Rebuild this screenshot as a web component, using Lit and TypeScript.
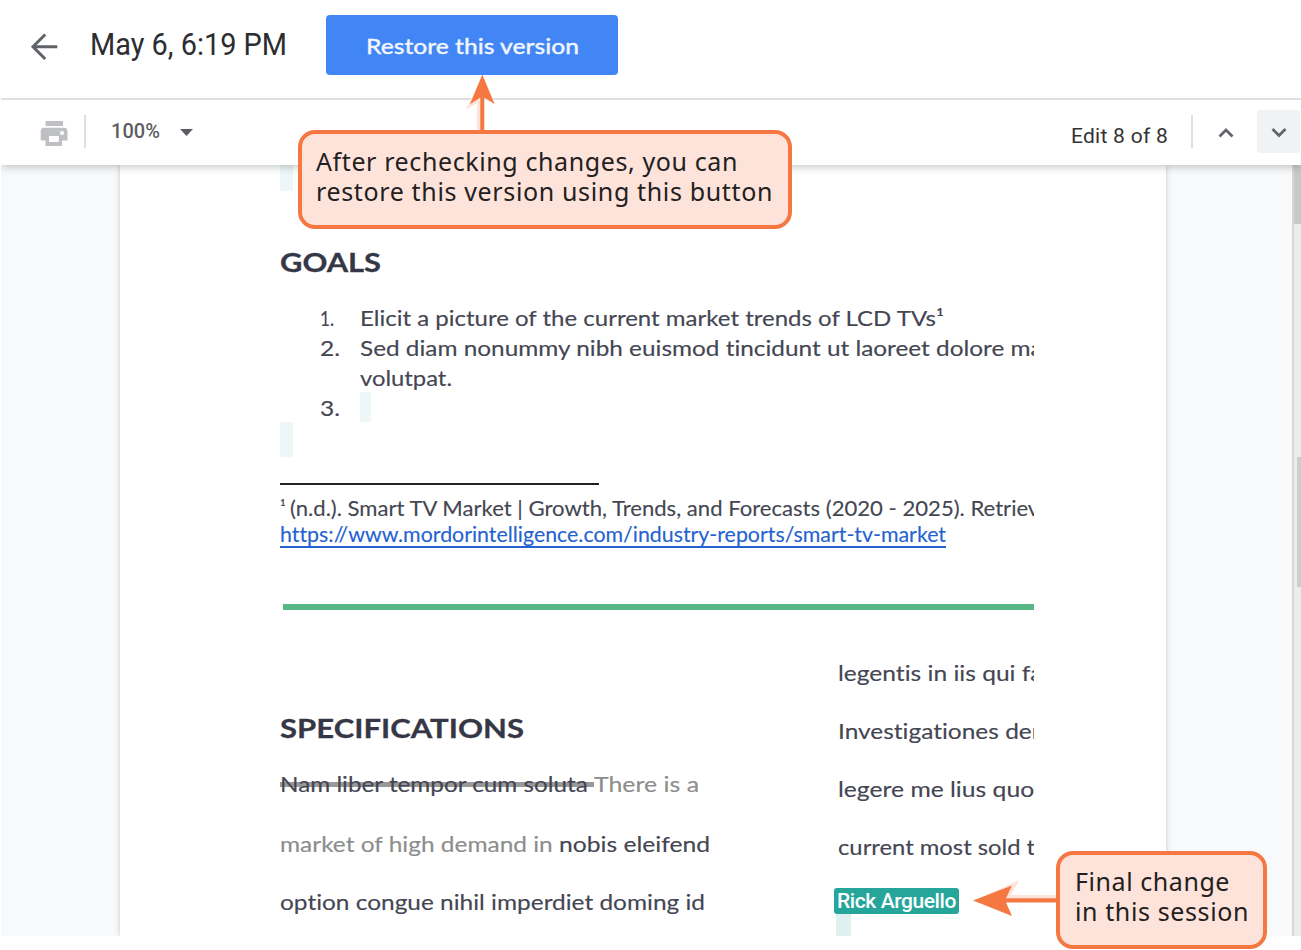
import { LitElement, html, css, svg } from "lit";
import { customElement, property } from "lit/decorators.js";

/** A run of text whose tracking (or horizontal scale) is adjusted to span `width` pixels. */
@customElement("fit-text")
class FitText extends LitElement {
  @property({ type: Number }) width = 0;
  @property({ type: Boolean }) stretch = false;

  static styles = css`
    :host { display: inline-block; white-space: pre; vertical-align: baseline; text-align: left; font-variant-ligatures: none; }
    .run { display: inline-block; transform-origin: 0 50%; }
  `;

  render() {
    return html`<span class="run"><slot></slot></span>`;
  }

  async firstUpdated() {
    this.fit();
    await document.fonts.ready;
    this.fit();
  }

  private fit() {
    const run = this.renderRoot.querySelector(".run") as HTMLElement;
    run.style.letterSpacing = "0px";
    run.style.transform = "none";
    const natural = run.getBoundingClientRect().width;
    const count = (this.textContent ?? "").length;
    if (!natural || !count || !this.width) return;
    if (this.stretch) {
      run.style.transform = `scaleX(${this.width / natural})`;
    } else {
      run.style.letterSpacing = `${(this.width - natural) / count}px`;
    }
    this.style.width = `${this.width}px`;
  }
}

@customElement("version-header")
class VersionHeader extends LitElement {
  static styles = css`
    :host { display: flex; align-items: flex-start; height: 98px; border-bottom: 2px solid #dfdfe5; background: #fff; }
    .back { width: 28px; height: 28px; margin: 33px 0 0 29px; }
    .title { margin: 23px 0 0 32px; width: 236px; font: 400 31.5px/44px Roboto, sans-serif; color: #2c2d30; }
    .restore { height: 60px; width: 292px; margin: 15px 0 0 -.5px; position: relative; left: .5px; border: 0; border-radius: 4px; padding: 1px 0 0; background: #4285f4; color: #f1f6ff; font: 500 22px/59px Lato, sans-serif; text-align: center; -webkit-text-stroke: .3px; }
  `;

  render() {
    return html`
      <svg class="back" viewBox="0 0 28 28" fill="none" stroke="#5f6368" stroke-width="3">
        <path d="M27.3 13.7H3M15.2 1.5L3 13.7L15.2 26" />
      </svg>
      <div class="title"><fit-text width="197" stretch>May 6, 6:19 PM</fit-text></div>
      <button class="restore"><fit-text width="213" stretch>Restore this version</fit-text></button>
    `;
  }
}

@customElement("version-toolbar")
class VersionToolbar extends LitElement {
  static styles = css`
    :host { display: flex; height: 65px; background: #fff; box-shadow: 0 1px 9px rgba(0, 0, 0, .27); clip-path: inset(0 0 -14px 0); position: relative; font-family: Roboto, sans-serif; }
    .print { width: 28px; height: 25px; margin: 21px 0 0 39px; }
    .rule { width: 2px; height: 33px; margin: 15px 0 0 16px; background: #dfe0e5; }
    .zoom { margin: 17px 0 0 25px; font: 500 20px/28px Roboto, sans-serif; color: #5c5e62; }
    .caret { width: 13px; height: 7px; margin: 29px 0 0 20px; }
    .space { flex: 1; }
    .count { margin-top: 22px; font: 400 21px/28px Roboto, sans-serif; color: #323336; }
    .rule.right { margin-left: 23px; }
    .up { width: 16px; height: 12px; margin: 27px 0 0 25px; }
    .next { display: flex; align-items: center; justify-content: center; width: 43px; height: 43px; margin: 10px 1px 0 23px; border-radius: 3px; background: #f1f2f4; }
    .next svg { width: 16px; height: 12px; margin-top: 3px; }
  `;

  render() {
    return html`
      <svg class="print" viewBox="0 0 28 25">
        <path fill="#bfc0c3" fill-rule="evenodd" d="M5.5 0H23V5H5.5ZM4 6.8H24Q27.5 6.8 27.5 10.5V19.5H22V25H5.5V19.5H.7V10.5Q.7 6.8 4 6.8ZM9 15V21H18.8V15ZM20.3 10.3V13.8H23.8V10.3Z" />
      </svg>
      <div class="rule"></div>
      <div class="zoom"><fit-text width="49">100%</fit-text></div>
      <svg class="caret" viewBox="0 0 13 7"><path d="M0 0H13L6.5 7Z" fill="#5a5d63" /></svg>
      <div class="space"></div>
      <div class="count"><fit-text width="97">Edit 8 of 8</fit-text></div>
      <div class="rule right"></div>
      <svg class="up" viewBox="0 0 16 12" fill="none" stroke="#63666b" stroke-width="2.8"><path d="M1.5 9.5L8 3L14.5 9.5" /></svg>
      <div class="next">
        <svg viewBox="0 0 16 12" fill="none" stroke="#63666b" stroke-width="2.8"><path d="M1.5 2L8 8.5L14.5 2" /></svg>
      </div>
    `;
  }
}

@customElement("document-page")
class DocumentPage extends LitElement {
  static styles = css`
    :host { display: block; width: 1046px; height: 771px; box-sizing: border-box; background: #fff; box-shadow: 0 0 5px rgba(60, 64, 67, .28); padding-left: 160px; font-family: Lato, sans-serif; color: #444653; }
    .body { width: 754px; height: 771px; overflow: hidden; }
    .mark { background: #edf7f7; }
    .mark.top { width: 13px; height: 26px; }
    h2 { margin: 0; font: 700 27.5px/40px Lato, sans-serif; color: #363746; -webkit-text-stroke: .3px; }
    .goals { margin-top: 51px; }
    .list { display: grid; grid-template-columns: 40px 714px; grid-auto-rows: 30px; margin: 20px 0 0 40px; font: 400 21.8px/32px Lato, sans-serif; white-space: nowrap; -webkit-text-stroke: .15px; }
    .list fit-text { margin-left: -.5px; }
    .mark.item { width: 11px; height: 30px; }
    .mark.para { width: 13px; height: 35px; }
    .note-rule { width: 318.5px; height: 2px; margin-top: 26px; background: #222; }
    .note { height: 53px; margin-top: 10px; font: 400 20.6px/26px Lato, sans-serif; white-space: nowrap; -webkit-text-stroke: .12px; }
    .link { display: block; width: 666px; height: 25px; line-height: 26px; color: #2462d0; border-bottom: 2px solid #2462d0; }
    .divider { height: 6px; margin: 56px 0 0 3px; background: #57b885; }
    .columns { display: flex; font: 400 21.8px/58px Lato, sans-serif; white-space: nowrap; -webkit-text-stroke: .15px; }
    .left { width: 558px; padding-top: 98px; }
    .left .line { height: 58px; }
    .left .line.first { height: 60px; }
    .spec { height: 40px; margin-bottom: 7px; }
    .right { padding-top: 34px; width: 196px; }
    .new { color: #8d8d8d; }
    .gone { display: inline-block; height: 26px; line-height: 26px; background: linear-gradient(#999, #999) 0 11px / 100% 5px no-repeat; }
  `;

  render() {
    return html`
      <div class="body">
        <div class="mark top"></div>
        <h2 class="goals"><fit-text stretch width="101">GOALS</fit-text></h2>
        <div class="list">
          <span><fit-text stretch width="14">1.</fit-text></span>
          <span><fit-text stretch width="584">Elicit a picture of the current market trends of LCD TVs¹</fit-text></span>
          <span><fit-text stretch width="20">2.</fit-text></span>
          <span><fit-text stretch width="721">Sed diam nonummy nibh euismod tincidunt ut laoreet dolore magna</fit-text></span>
          <span></span>
          <span><fit-text stretch width="92">volutpat.</fit-text></span>
          <span><fit-text stretch width="20">3.</fit-text></span>
          <div class="mark item"></div>
        </div>
        <div class="mark para"></div>
        <div class="note-rule"></div>
        <div class="note">
          <fit-text stretch width="10">¹ </fit-text><fit-text stretch width="773">(n.d.). Smart TV Market | Growth, Trends, and Forecasts (2020 - 2025). Retrieved</fit-text>
          <span class="link"><fit-text stretch width="666">https://www.mordorintelligence.com/industry-reports/smart-tv-market</fit-text></span>
        </div>
        <div class="divider"></div>
        <div class="columns">
          <div class="left">
            <h2 class="spec"><fit-text stretch width="244">SPECIFICATIONS</fit-text></h2>
            <div class="line first"><span class="gone"><fit-text stretch width="314">Nam liber tempor cum soluta </fit-text></span><span class="new"><fit-text stretch width="105">There is a</fit-text></span></div>
            <div class="line"><span class="new"><fit-text stretch width="279">market of high demand in </fit-text></span><fit-text stretch width="151">nobis eleifend</fit-text></div>
            <div class="line"><fit-text stretch width="425">option congue nihil imperdiet doming id</fit-text></div>
          </div>
          <div class="right">
            <div><fit-text stretch width="231">legentis in iis qui facit</fit-text></div>
            <div><fit-text stretch width="252">Investigationes demons</fit-text></div>
            <div><fit-text stretch width="210">legere me lius quod</fit-text></div>
            <div><fit-text stretch width="223">current most sold the</fit-text></div>
          </div>
        </div>
      </div>
    `;
  }
}

@customElement("app-root")
class AppRoot extends LitElement {
  static styles = css`
    :host { display: block; position: relative; width: 1301px; height: 950px; overflow: hidden; background: #fff; }
    .bar { position: relative; z-index: 2; margin-left: 1px; }
    .top { z-index: 3; }
    .work { display: flex; height: 771px; margin-left: 1px; overflow: hidden; background: #f8f9fb; padding-left: 119px; }
    .scroll { width: 7px; margin-left: auto; border-left: 2px solid #d9d5d2; background: #eeeded; display: flex; flex-direction: column; align-items: flex-end; }
    .thumb { width: 7px; height: 59px; background: #c9c9c9; }
    .inner { width: 4px; height: 130px; margin-top: 233px; background: #cdcecd; }
    .author { position: absolute; left: 834px; top: 888px; width: 125px; height: 26px; border-radius: 3px; background: #26a69a; color: #fff; font: 500 21px/26px Roboto, sans-serif; }
    .author fit-text { margin-left: 3px; }
    .edit { position: absolute; left: 836px; top: 914px; width: 15px; height: 22px; background: #def1f0; }
    .callout { position: absolute; z-index: 5; box-sizing: border-box; border: 4px solid #f57842; border-radius: 17px; background: #fee3da; color: #222021; font: 400 25px/30px "Noto Sans", sans-serif; padding: 12px 0 0 15px; }
    .callout div { height: 30px; white-space: nowrap; }
    .restore-note { left: 297.5px; top: 130px; width: 494px; height: 99px; padding-left: 14.5px; }
    .final-note { left: 1056px; top: 850.5px; width: 211px; height: 98.5px; padding-top: 11.5px; }
    .arrows { position: absolute; z-index: 4; left: 0; top: 0; width: 1301px; height: 950px; pointer-events: none; }
  `;

  render() {
    return html`
      <version-header class="bar top"></version-header>
      <version-toolbar class="bar tools"></version-toolbar>
      <main class="work">
        <document-page></document-page>
        <div class="scroll"><div class="thumb"></div><div class="inner"></div></div>
      </main>
      <div class="author"><fit-text width="119">Rick Arguello</fit-text></div>
      <div class="edit"></div>
      <svg class="arrows" viewBox="0 0 1301 950">
        ${svg`
          <path fill="#fee3da" d="M480 82L465.5 110L477 103V131H482V82ZM980 898L1019 880L1011 895H1056V900Z"/>
          <path fill="#f57842" d="M482.3 74.5L494.7 104.3L484.3 97.5V131H480.3V97.5L470 104.3ZM973 900.5L1012 885.5L1006 898.3H1057V902.5H1006L1012 916Z"/>
        `}
      </svg>
      <div class="callout restore-note">
        <div><fit-text width="422">After rechecking changes, you can</fit-text></div>
        <div><fit-text width="457">restore this version using this button</fit-text></div>
      </div>
      <div class="callout final-note">
        <div><fit-text width="155">Final change</fit-text></div>
        <div><fit-text width="174">in this session</fit-text></div>
      </div>
    `;
  }
}
